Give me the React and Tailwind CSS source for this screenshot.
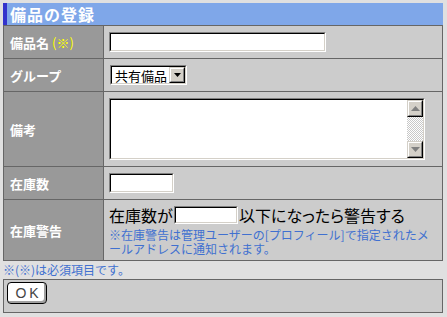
import React from "react";

const jp = { fontFamily: '"Noto Sans CJK JP", "Noto Sans", sans-serif' };

function Inset({ className = "", children }) {
  return (
    <div className={`border border-t-[#808080] border-l-[#808080] border-b-white border-r-white ${className}`}>
      <div className="w-full h-full border border-t-black border-l-black border-b-[#d4d0c8] border-r-[#d4d0c8] bg-white">
        {children}
      </div>
    </div>
  );
}

function Raised({ className = "", children }) {
  return (
    <div className={`border border-t-[#d4d0c8] border-l-[#d4d0c8] border-b-black border-r-black ${className}`}>
      <div className="w-full h-full border border-t-white border-l-white border-b-[#808080] border-r-[#808080] bg-[#d4d0c8] flex items-center justify-center">
        {children}
      </div>
    </div>
  );
}

function Row({ label, height, children }) {
  return (
    <div className="flex border-b border-[#666]" style={{ height }}>
      <div className="w-[100px] shrink-0 bg-[#999] border-r border-[#666] flex items-center pl-[6px] text-white font-bold text-[13px] leading-none">
        {label}
      </div>
      <div className="flex-1 bg-[#ccc] flex items-center pl-[5px]">{children}</div>
    </div>
  );
}

export default function App() {
  return (
    <div className="w-[447px] h-[317px] bg-[#e0e0e0] pt-[3px] pl-[3px] overflow-hidden" style={jp}>
      <div className="w-[440px] h-[22px] bg-[#7fa7e9] border-l-[4px] border-[#3333cc] flex items-center pl-[3px] text-white font-bold text-[16px] tracking-[1px] leading-none">
        備品の登録
      </div>
      <div className="w-[440px] border-t border-l border-r border-[#666]">
        <Row label={<span>備品名<span className="text-[#ffff00] font-normal ml-[3px]">(※)</span></span>} height={33}>
          <Inset className="w-[217px] h-[20px]" />
        </Row>
        <Row label="グループ" height={33}>
          <div className="ml-[1px] w-[77px] h-[20px] border border-t-[#808080] border-l-[#808080] border-b-white border-r-white">
            <div className="w-full h-full border border-t-black border-l-black border-b-[#d4d0c8] border-r-[#d4d0c8] bg-white flex items-center justify-between">
              <span className="text-[13px] text-black leading-none pl-[3px]">共有備品</span>
              <Raised className="w-[16px] h-[16px]">
                <svg width="7" height="4" viewBox="0 0 7 4"><path d="M0 0h7L3.5 4z" fill="#000" /></svg>
              </Raised>
            </div>
          </div>
        </Row>
        <Row label="備考" height={75}>
          <Inset className="w-[316px] h-[62px]">
            <div className="flex justify-end h-full">
              <div className="w-[16px] h-full flex flex-col bg-[repeating-conic-gradient(#c8c8c8_0_25%,#fff_0_50%)] bg-[length:2px_2px]">
                <Raised className="w-[16px] h-[17px]">
                  <svg width="9" height="5" viewBox="0 0 9 5"><path d="M4.5 0L9 5H0z" fill="#808080" /></svg>
                </Raised>
                <div className="flex-1" />
                <Raised className="w-[16px] h-[17px]">
                  <svg width="9" height="5" viewBox="0 0 9 5"><path d="M0 0h9L4.5 5z" fill="#808080" /></svg>
                </Raised>
              </div>
            </div>
          </Inset>
        </Row>
        <Row label="在庫数" height={33}>
          <Inset className="w-[65px] h-[20px]" />
        </Row>
        <Row label="在庫警告" height={61}>
          <div className="flex flex-col">
            <div className="flex items-center text-[16px] text-black leading-none h-[20px]">
              <span>在庫数が</span>
              <Inset className="w-[64px] h-[18px] ml-[1px]" />
              <span className="ml-[1px] [font-feature-settings:'palt']">以下になったら警告する</span>
            </div>
            <div className="mt-[3px] text-[12px] text-[#4070d0] whitespace-nowrap">
              <div className="h-[14px] leading-[14px]">※在庫警告は管理ユーザーの[プロフィール]で指定されたメ</div>
              <div className="h-[14px] leading-[14px]">ールアドレスに通知されます。</div>
            </div>
          </div>
        </Row>
      </div>
      <div className="h-[18px] flex items-center text-[12px] text-[#4070d0] leading-none">
        ※(※)は必須項目です。
      </div>
      <div className="w-[440px] h-[34px] bg-[#ccc] border border-[#666] pt-[2px] pl-[3px]">
        <div className="w-[40px] h-[22px] rounded-[4px] border border-black bg-white shadow-[inset_-2px_-2px_0_#a0a0a0] flex items-center justify-center text-[14px] text-[#444] tracking-[3px] pl-[3px] leading-none" style={{ fontFamily: '"Liberation Sans", sans-serif' }}>
          OK
        </div>
      </div>
    </div>
  );
}
